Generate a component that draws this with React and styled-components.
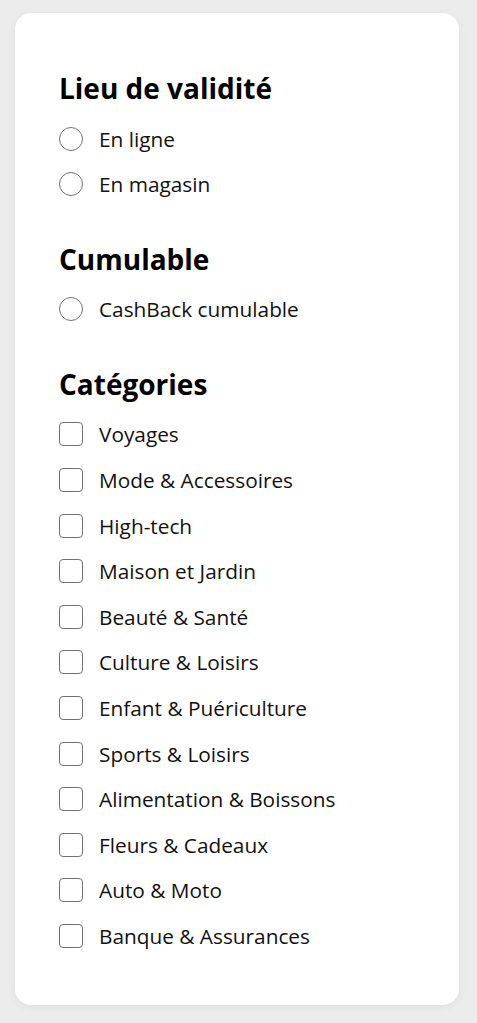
import styled, { createGlobalStyle } from "styled-components";

const GlobalStyle = createGlobalStyle`
    html, body {
        margin: 0;
        padding: 0;
        background: #ececec;
        font-family: "Open Sans", "Noto Sans", sans-serif;
        color: #111;
    }
`

const Page = styled.div`
    padding: 13px 18px 19px 15px;
`

const Card = styled.aside`
    background: #ffffff;
    border-radius: 16px;
    box-shadow: 0 2px 10px rgba(0, 0, 0, 0.06);
    padding: 56px 44px 46px 44px;
    display: flex;
    flex-direction: column;
    gap: 32.4px;
`

const Group = styled.section`
    display: flex;
    flex-direction: column;
`

const Title = styled.h3`
    margin: 0 0 9px 0;
    font-size: 28px;
    font-weight: 700;
    line-height: 38px;
    color: #000;
`

const List = styled.ul`
    list-style: none;
    margin: 0;
    padding: 0;
    display: flex;
    flex-direction: column;
`

const Option = styled.li`
    display: flex;
    align-items: center;
    gap: 16px;
    height: 45.6px;
    font-size: 20.8px;
    color: #111;
`

const Mark = styled.span`
    width: 24px;
    height: 24px;
    box-sizing: border-box;
    border: 1.6px solid #727272;
    border-radius: ${(p) => (p.$round ? "50%" : "4px")};
    flex-shrink: 0;
`

const groups = [
    { title: "Lieu de validité", round: true, items: ["En ligne", "En magasin"] },
    { title: "Cumulable", round: true, items: ["CashBack cumulable"] },
    {
        title: "Catégories",
        round: false,
        items: [
            "Voyages",
            "Mode & Accessoires",
            "High-tech",
            "Maison et Jardin",
            "Beauté & Santé",
            "Culture & Loisirs",
            "Enfant & Puériculture",
            "Sports & Loisirs",
            "Alimentation & Boissons",
            "Fleurs & Cadeaux",
            "Auto & Moto",
            "Banque & Assurances",
        ],
    },
]

export default function App() {
    return (
        <Page>
            <GlobalStyle />
            <Card>
                {groups.map((g) => (
                    <Group key={g.title}>
                        <Title>{g.title}</Title>
                        <List>
                            {g.items.map((item) => (
                                <Option key={item}>
                                    <Mark $round={g.round} />
                                    <span>{item}</span>
                                </Option>
                            ))}
                        </List>
                    </Group>
                ))}
            </Card>
        </Page>
    )
}
